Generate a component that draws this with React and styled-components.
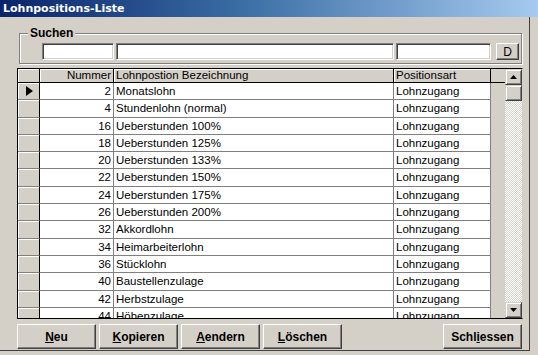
import React from "react";
import styled, { createGlobalStyle } from "styled-components";

const GlobalStyle = createGlobalStyle`
  html, body {
    margin: 0;
    padding: 0;
    background: #d4d0c8;
  }
  body {
    font-family: "Liberation Sans", Arial, sans-serif;
    font-size: 11.5px;
    color: #000;
  }
`;

const rows = [
  { nr: 2, name: "Monatslohn", art: "Lohnzugang" },
  { nr: 4, name: "Stundenlohn (normal)", art: "Lohnzugang" },
  { nr: 16, name: "Ueberstunden 100%", art: "Lohnzugang" },
  { nr: 18, name: "Ueberstunden 125%", art: "Lohnzugang" },
  { nr: 20, name: "Ueberstunden 133%", art: "Lohnzugang" },
  { nr: 22, name: "Ueberstunden 150%", art: "Lohnzugang" },
  { nr: 24, name: "Ueberstunden 175%", art: "Lohnzugang" },
  { nr: 26, name: "Ueberstunden 200%", art: "Lohnzugang" },
  { nr: 32, name: "Akkordlohn", art: "Lohnzugang" },
  { nr: 34, name: "Heimarbeiterlohn", art: "Lohnzugang" },
  { nr: 36, name: "Stücklohn", art: "Lohnzugang" },
  { nr: 40, name: "Baustellenzulage", art: "Lohnzugang" },
  { nr: 42, name: "Herbstzulage", art: "Lohnzugang" },
  { nr: 44, name: "Höhenzulage", art: "Lohnzugang" },
];

const buttons = [
  { key: "N", rest: "eu" },
  { key: "K", rest: "opieren" },
  { key: "A", rest: "endern" },
  { key: "L", rest: "öschen" },
];

export default function App() {
  return (
    <>
      <GlobalStyle />
      <Window>
        <TitleBar>Lohnpositions-Liste</TitleBar>
        <Body>
          <Client>
            <GroupBox>
              <GroupLabel>Suchen</GroupLabel>
              <SearchRow>
                <Field w={72} />
                <Field w={278} />
                <Field w={95} />
                <SmallButton>D</SmallButton>
              </SearchRow>
            </GroupBox>

            <GridFrame>
              <Table>
                <HeaderRow>
                  <IndicatorHead />
                  <HeadCell align="right" w={74}>Nummer</HeadCell>
                  <HeadCell w={280}>Lohnpostion Bezeichnung</HeadCell>
                  <HeadCell w={97}>Positionsart</HeadCell>
                </HeaderRow>
                {rows.map((r, i) => (
                  <Row key={r.nr}>
                    <Indicator>{i === 0 && <Arrow />}</Indicator>
                    <Cell align="right" w={74}>{r.nr}</Cell>
                    <Cell w={280}>{r.name}</Cell>
                    <Cell w={97}>{r.art}</Cell>
                  </Row>
                ))}
              </Table>
              <ScrollBar>
                <ScrollBtn>
                  <svg width="7" height="4" viewBox="0 0 7 4">
                    <path d="M3.5 0 L7 4 L0 4 Z" fill="#000" />
                  </svg>
                </ScrollBtn>
                <Thumb />
                <Track />
                <ScrollBtn>
                  <svg width="7" height="4" viewBox="0 0 7 4">
                    <path d="M0 0 L7 0 L3.5 4 Z" fill="#000" />
                  </svg>
                </ScrollBtn>
              </ScrollBar>
            </GridFrame>

            <ButtonBar>
              <ButtonGroup>
                {buttons.map((b) => (
                  <PushButton key={b.key}>
                    <u>{b.key}</u>
                    {b.rest}
                  </PushButton>
                ))}
              </ButtonGroup>
              <PushButton>
                Schl<u>i</u>essen
              </PushButton>
            </ButtonBar>
          </Client>
        </Body>
      </Window>
    </>
  );
}

/* ================= STYLES ================= */
const Window = styled.div`
  width: 538px;
  height: 355px;
  display: flex;
  flex-direction: column;
  overflow: hidden;
  background: #d4d0c8;
`;

const TitleBar = styled.div`
  height: 17px;
  flex: none;
  display: flex;
  align-items: center;
  padding-left: 3px;
  background: linear-gradient(90deg, #0a246a 0%, #3a6ea5 45%, #a6caf0 100%);
  color: #fff;
  font-family: "DejaVu Sans", Verdana, sans-serif;
  font-weight: bold;
  font-size: 11px;
`;

const Body = styled.div`
  flex: 1;
  display: flex;
  align-items: flex-start;
`;

const Client = styled.div`
  width: 530px;
  height: 334px;
  box-sizing: border-box;
  border-right: 1px solid #404040;
  border-bottom: 1px solid #404040;
  padding: 10px 7px 0 17px;
  display: flex;
  flex-direction: column;
`;

const GroupBox = styled.div`
  position: relative;
  margin: 6px 0 0 2px;
  height: 31px;
  box-sizing: border-box;
  border: 1px solid #808080;
  box-shadow: inset 1px 1px 0 #fff, 1px 1px 0 #fff;
  padding: 9px 0 0 22px;
`;

const GroupLabel = styled.span`
  position: absolute;
  top: -7px;
  left: 8px;
  padding: 0 2px;
  background: #d4d0c8;
  font-weight: bold;
  font-size: 12px;
  line-height: 13px;
`;

const SearchRow = styled.div`
  display: flex;
  align-items: flex-start;
  gap: 2px;
`;

const Field = styled.div`
  width: ${(p) => p.w}px;
  height: 17px;
  box-sizing: border-box;
  background: #fff;
  border-top: 1px solid #808080;
  border-left: 1px solid #808080;
  border-right: 1px solid #fff;
  border-bottom: 1px solid #fff;
  box-shadow: inset 1px 1px 0 #404040, inset -1px -1px 0 #d4d0c8;
`;

const SmallButton = styled.div`
  margin-left: 3px;
  width: 23px;
  height: 17px;
  box-sizing: border-box;
  display: flex;
  align-items: center;
  justify-content: center;
  font-size: 12px;
  background: #d4d0c8;
  border-top: 1px solid #fff;
  border-left: 1px solid #fff;
  border-right: 1px solid #404040;
  border-bottom: 1px solid #404040;
  box-shadow: inset -1px -1px 0 #808080;
`;

const GridFrame = styled.div`
  margin-top: 4px;
  height: 251px;
  width: 506px;
  box-sizing: border-box;
  border: 1px solid #000;
  border-right-color: #d4d0c8;
  display: flex;
  overflow: hidden;
  background: #d4d0c8;
`;

const Table = styled.div`
  flex: 1;
  display: flex;
  flex-direction: column;
  overflow: hidden;
`;

const HeaderRow = styled.div`
  display: flex;
  height: 13px;
  flex: none;
  border-bottom: 1px solid #000;
`;

const IndicatorHead = styled.div`
  width: 22px;
  box-sizing: border-box;
  border-right: 1px solid #000;
  background: #d4d0c8;
  box-shadow: inset 1px 1px 0 #fff;
`;

const HeadCell = styled.div`
  width: ${(p) => p.w}px;
  box-sizing: border-box;
  padding: 0 2px;
  text-align: ${(p) => p.align || "left"};
  border-right: 1px solid #000;
  background: #d4d0c8;
  box-shadow: inset 1px 1px 0 #fff;
  line-height: 13px;
  white-space: nowrap;
  overflow: hidden;
`;

const Row = styled.div`
  display: flex;
  height: 17.3px;
  flex: none;
`;

const Indicator = styled.div`
  width: 22px;
  box-sizing: border-box;
  border-right: 1px solid #000;
  border-bottom: 1px solid #808080;
  background: #d4d0c8;
  box-shadow: inset 1px 1px 0 #fff;
  display: flex;
  align-items: center;
  justify-content: center;
`;

const Arrow = styled.div`
  width: 0;
  height: 0;
  border-top: 5px solid transparent;
  border-bottom: 5px solid transparent;
  border-left: 7px solid #000;
  margin-left: 1px;
`;

const Cell = styled.div`
  width: ${(p) => p.w}px;
  box-sizing: border-box;
  padding: 0 2px;
  background: #fff;
  text-align: ${(p) => p.align || "left"};
  border-right: 1px solid #808080;
  border-bottom: 1px solid #808080;
  line-height: 16px;
  white-space: nowrap;
  overflow: hidden;
`;

const ScrollBar = styled.div`
  width: 17px;
  flex: none;
  display: flex;
  flex-direction: column;
`;

const ScrollBtn = styled.div`
  height: 16px;
  flex: none;
  box-sizing: border-box;
  display: flex;
  align-items: center;
  justify-content: center;
  background: #d4d0c8;
  border-top: 1px solid #d4d0c8;
  border-left: 1px solid #d4d0c8;
  border-right: 1px solid #404040;
  border-bottom: 1px solid #404040;
  box-shadow: inset 1px 1px 0 #fff, inset -1px -1px 0 #808080;
`;

const Thumb = styled(ScrollBtn)`
  height: 16px;
`;

const Track = styled.div`
  flex: 1;
  background-color: #fff;
  background-image: linear-gradient(45deg, #d4d0c8 25%, transparent 25%, transparent 75%, #d4d0c8 75%),
    linear-gradient(45deg, #d4d0c8 25%, transparent 25%, transparent 75%, #d4d0c8 75%);
  background-size: 2px 2px;
  background-position: 0 0, 1px 1px;
`;

const ButtonBar = styled.div`
  margin-top: 5px;
  display: flex;
  justify-content: space-between;
`;

const ButtonGroup = styled.div`
  display: flex;
  gap: 3px;
`;

const PushButton = styled.div`
  width: 79px;
  height: 25px;
  box-sizing: border-box;
  display: flex;
  align-items: center;
  justify-content: center;
  font-weight: bold;
  font-size: 12px;
  background: #d4d0c8;
  border-top: 1px solid #fff;
  border-left: 1px solid #fff;
  border-right: 1px solid #404040;
  border-bottom: 1px solid #404040;
  box-shadow: inset -1px -1px 0 #808080;
`;
